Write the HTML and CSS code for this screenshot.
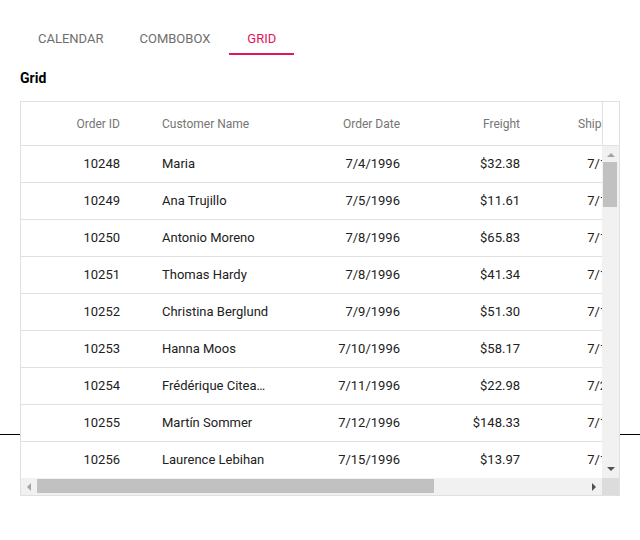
FILE: index.html
```html
<!DOCTYPE html>
<html>
<head>
<meta charset="utf-8">
<link rel="stylesheet" href="styles.css">
</head>
<body>
<div class="page">
  <div class="backline"></div>
  <div class="tabs">
    <div class="tab">CALENDAR</div>
    <div class="tab">COMBOBOX</div>
    <div class="tab active">GRID</div>
  </div>
  <h2 class="title">Grid</h2>
  <div class="grid">
    <div class="grid-header">
      <div class="viewport">
        <div class="row hrow">
          <div class="cell c1 r">Order ID</div><div class="cell c2 l">Customer Name</div><div class="cell c3 r">Order Date</div><div class="cell c4 r">Freight</div><div class="cell c5 r">Shipped Date</div><div class="cell c6 l">Ship Country</div>
        </div>
      </div>
      <div class="hspacer"></div>
    </div>
    <div class="grid-body">
      <div class="viewport">
        <div class="row"><div class="cell c1 r">10248</div><div class="cell c2 l">Maria</div><div class="cell c3 r">7/4/1996</div><div class="cell c4 r">$32.38</div><div class="cell c5 r">7/16/1996</div><div class="cell c6 l">France</div></div>
        <div class="row"><div class="cell c1 r">10249</div><div class="cell c2 l">Ana Trujillo</div><div class="cell c3 r">7/5/1996</div><div class="cell c4 r">$11.61</div><div class="cell c5 r">7/10/1996</div><div class="cell c6 l">Germany</div></div>
        <div class="row"><div class="cell c1 r">10250</div><div class="cell c2 l">Antonio Moreno</div><div class="cell c3 r">7/8/1996</div><div class="cell c4 r">$65.83</div><div class="cell c5 r">7/12/1996</div><div class="cell c6 l">Brazil</div></div>
        <div class="row"><div class="cell c1 r">10251</div><div class="cell c2 l">Thomas Hardy</div><div class="cell c3 r">7/8/1996</div><div class="cell c4 r">$41.34</div><div class="cell c5 r">7/15/1996</div><div class="cell c6 l">France</div></div>
        <div class="row"><div class="cell c1 r">10252</div><div class="cell c2 l">Christina Berglund</div><div class="cell c3 r">7/9/1996</div><div class="cell c4 r">$51.30</div><div class="cell c5 r">7/11/1996</div><div class="cell c6 l">Belgium</div></div>
        <div class="row"><div class="cell c1 r">10253</div><div class="cell c2 l">Hanna Moos</div><div class="cell c3 r">7/10/1996</div><div class="cell c4 r">$58.17</div><div class="cell c5 r">7/16/1996</div><div class="cell c6 l">Brazil</div></div>
        <div class="row"><div class="cell c1 r">10254</div><div class="cell c2 l">Frédérique Citeaux</div><div class="cell c3 r">7/11/1996</div><div class="cell c4 r">$22.98</div><div class="cell c5 r">7/23/1996</div><div class="cell c6 l">Switzerland</div></div>
        <div class="row"><div class="cell c1 r">10255</div><div class="cell c2 l">Martín Sommer</div><div class="cell c3 r">7/12/1996</div><div class="cell c4 r">$148.33</div><div class="cell c5 r">7/15/1996</div><div class="cell c6 l">Switzerland</div></div>
        <div class="row last"><div class="cell c1 r">10256</div><div class="cell c2 l">Laurence Lebihan</div><div class="cell c3 r">7/15/1996</div><div class="cell c4 r">$13.97</div><div class="cell c5 r">7/17/1996</div><div class="cell c6 l">Brazil</div></div>
      </div>
      <div class="vscroll">
        <div class="arrow up"></div>
        <div class="vtrack"><div class="vthumb"></div></div>
        <div class="arrow down"></div>
      </div>
    </div>
    <div class="grid-foot">
      <div class="hscroll">
        <div class="arrow left"></div>
        <div class="htrack"><div class="hthumb"></div></div>
        <div class="arrow right"></div>
      </div>
      <div class="corner"></div>
    </div>
  </div>
</div>
</body>
</html>
```

FILE: styles.css
```css
* { box-sizing: border-box; }
html, body { margin: 0; padding: 0; background: #fff; }
body { font-family: Roboto, "Noto Sans", "Liberation Sans", sans-serif; }
.page { position: relative; padding: 20px; width: 640px; height: 540px; }
.backline { position: absolute; left: 0; right: 0; top: 434px; height: 1px; background: #000; z-index: 0; }

.tabs { display: flex; }
.tab {
  padding: 11px 18px 6px;
  font-size: 13px;
  line-height: 16px;
  color: #6e6e6e;
  border-bottom: 2px solid transparent;
}
.tab.active { margin-left: 1px; color: #e3165b; border-bottom-color: #e3165b; }

.title { margin: 13px 0 13px; font-size: 14px; line-height: 20px; font-weight: 700; color: #000; }

.grid {
  position: relative;
  z-index: 1;
  width: 600px;
  border: 1px solid #e0e0e0;
  background: #fff;
}
.grid-header, .grid-body, .grid-foot { display: flex; }
.viewport { flex: 1; overflow: hidden; min-width: 0; }
.hspacer { width: 17px; border-left: 1px solid #e0e0e0; border-bottom: 1px solid #e0e0e0; }

.row {
  display: flex;
  width: 809px;
  height: 37px;
  border-bottom: 1px solid #e0e0e0;
  font-size: 13px;
  color: #212121;
}
.row.last { border-bottom: none; height: 36px; }
.row.hrow { height: 44px; font-size: 12px; color: #757575; }
.cell {
  flex: none;
  padding: 0 21px;
  white-space: nowrap;
  overflow: hidden;
  text-overflow: ellipsis;
  align-self: center;
  line-height: 18px;
}
.c1 { width: 120px; } .c2 { width: 150px; } .c3 { width: 130px; }
.c4 { width: 120px; } .c5 { width: 129px; } .c6 { width: 160px; }
.r { text-align: right; }
.l { text-align: left; }

.vscroll {
  width: 17px;
  background: #f1f1f1;
  display: flex;
  flex-direction: column;
  align-items: center;
}
.vtrack { flex: 1; width: 100%; padding: 0 2px 0 1px; }
.vthumb { height: 45px; background: #c1c1c1; }
.arrow { width: 0; height: 0; }
.arrow.up { margin: 7px 0 5px; border-left: 4px solid transparent; border-right: 4px solid transparent; border-bottom: 4px solid #a3a3a3; }
.arrow.down { margin: 6px 0 7px; border-left: 4px solid transparent; border-right: 4px solid transparent; border-top: 4px solid #505050; }

.grid-foot { height: 17px; }
.hscroll { flex: 1; background: #f1f1f1; display: flex; align-items: center; }
.htrack { flex: 1; height: 100%; padding: 1px 0 2px; }
.hthumb { width: 397px; height: 100%; background: #c1c1c1; }
.arrow.left { margin: 0 6px 0 6px; border-top: 4px solid transparent; border-bottom: 4px solid transparent; border-right: 4px solid #a3a3a3; }
.arrow.right { margin: 0 6px 0 6px; border-top: 4px solid transparent; border-bottom: 4px solid transparent; border-left: 4px solid #505050; }
.corner { width: 17px; background: #dcdcdc; }
```
